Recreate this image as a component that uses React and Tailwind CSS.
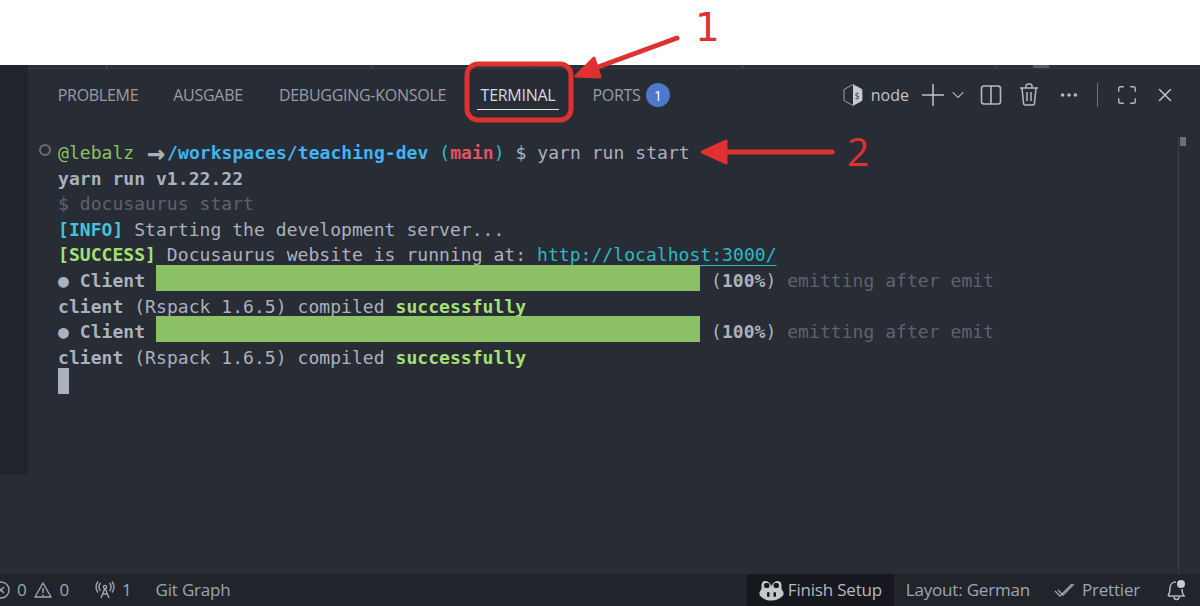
import React from 'react';
import { ChevronDown, Ellipsis, Maximize, Plus, X } from 'lucide-react';

const mono = "font-['DejaVu_Sans_Mono','Liberation_Mono',monospace]";
const ui = "font-['Open_Sans','Noto_Sans',sans-serif]";

const tabs = [
	{ label: 'PROBLEME', width: 'w-[80px]', gap: 'mr-[35px]' },
	{ label: 'AUSGABE', width: 'w-[70px]', gap: 'mr-[36px]' },
	{ label: 'DEBUGGING-KONSOLE', width: 'w-[167px]', gap: 'mr-[31px]' },
	{ label: 'TERMINAL', width: 'w-[82px]', gap: 'mr-[34px]', active: true },
	{ label: 'PORTS', width: 'w-[47px]', gap: 'mr-[6px]' },
];

function Tab({ label, width, gap, active }) {
	return (
		<div className={`${width} ${gap} h-[29px] flex justify-center items-center whitespace-nowrap text-[16px] tracking-[-0.27px] ${active ? 'text-[#d7dae0] border-b border-[#e4e6ea]' : 'text-[#9a9da3]'}`}>
			{label}
		</div>
	);
}

// cut-off editor rulers peeking out above the panel
function TopStrip() {
	return (
		<div className="relative h-[4px] shrink-0 bg-[#2c3039] border-b border-[#363a44]">
			<span className="absolute left-[78px] top-0 w-[1px] h-[3px] bg-[#4b505a]" />
			<span className="absolute left-[343px] top-0 w-[1px] h-[3px] bg-[#4b505a]" />
			<span className="absolute left-[505px] top-0 w-[1px] h-[3px] bg-[#4b505a]" />
			<span className="absolute left-[714px] top-0 w-[1px] h-[3px] bg-[#4b505a]" />
			<span className="absolute left-[968px] top-0 w-[1px] h-[3px] bg-[#4b505a]" />
			<span className="absolute left-[1005px] top-0 w-[16px] h-[3px] bg-[#565b65]" />
		</div>
	);
}

function NodeIcon() {
	return (
		<svg width="20" height="24" viewBox="0 0 20 24" className="mr-[8px]">
			<path d="M10 1.5 L19 6.5 V17.5 L10 22.5 L1 17.5 V6.5 Z" fill="none" stroke="#9aa0a8" strokeWidth="1" />
			<path d="M10 1.5 L19 6.5 V17.5 L10 22.5 Z" fill="#c8ccd2" />
			<text x="11.5" y="16" fontSize="8" fill="#282c34" fontFamily="DejaVu Sans Mono">$</text>
		</svg>
	);
}

function SplitIcon() {
	return (
		<svg width="22" height="22" viewBox="0 0 22 22" fill="none" stroke="#b5b9bf" strokeWidth="1.6">
			<rect x="1.5" y="2" width="19" height="18" rx="2.5" />
			<path d="M11 2 V20" />
		</svg>
	);
}

function TrashIcon() {
	return (
		<svg width="20" height="24" viewBox="0 0 20 24" fill="none" stroke="#b5b9bf" strokeWidth="1.5">
			<path d="M1 5 H19 M7 5 V3 a2 2 0 0 1 2 -2 h2 a2 2 0 0 1 2 2 V5" />
			<path d="M3 5 L4.5 20 a2 2 0 0 0 2 2 h7 a2 2 0 0 0 2 -2 L17 5" />
			<path d="M8 9 V18 M12 9 V18" />
		</svg>
	);
}

function CopilotIcon() {
	return (
		<svg width="25" height="21" viewBox="0 0 25 21" fill="#c5c8cd">
			<path d="M12.5 6 C10 0 3 -1 2.5 5 C2.4 7 3 8 2 10 L0.5 12 V15 C4 19 8 20.5 12.5 20.5 C17 20.5 21 19 24.5 15 V12 L23 10 C22 8 22.6 7 22.5 5 C22 -1 15 0 12.5 6 Z" />
			<rect x="5" y="3" width="5.5" height="5" rx="2" fill="#16181d" />
			<rect x="14.5" y="3" width="5.5" height="5" rx="2" fill="#16181d" />
			<rect x="8" y="12" width="2.5" height="5" rx="1.2" fill="#16181d" />
			<rect x="14.5" y="12" width="2.5" height="5" rx="1.2" fill="#16181d" />
		</svg>
	);
}

function DoubleCheckIcon() {
	return (
		<svg width="22" height="22" viewBox="0 0 22 22" fill="none" stroke="#9da5b4" strokeWidth="1.3" className="mr-[6px]">
			<path d="M1 12 L6 17 L8 15 M4 11 L9 16 L20 5" />
			<path d="M8 15 L18 5" />
		</svg>
	);
}

function Annotations() {
	return (
		<svg width="1200" height="606" viewBox="0 0 1200 606" className="absolute inset-0 pointer-events-none">
			<rect x="467" y="64" width="104" height="56" rx="11" fill="none" stroke="#e03131" strokeWidth="5" />
			<path d="M677 38 L598 67" stroke="#e03131" strokeWidth="5" strokeLinecap="round" />
			<path d="M576 76 L594 58 L600 77 Z" fill="#e03131" stroke="#e03131" strokeWidth="3" strokeLinejoin="round" />
			<path d="M832 152 H725" stroke="#e03131" strokeWidth="5" strokeLinecap="round" />
			<path d="M702 152 L726 141 V163 Z" fill="#e03131" stroke="#e03131" strokeWidth="3" strokeLinejoin="round" />
		</svg>
	);
}

function Line({ children, className = '' }) {
	return <div className={`h-[25.6px] whitespace-pre ${className}`}>{children}</div>;
}

function ProgressLine() {
	return (
		<Line className="flex text-[#abb2bf] font-bold">
			<span>● Client </span>
			<span className="w-[544px] -mt-[3px] h-[26px] bg-[#8cc265]" />
			<span className="ml-[11px]"><span className="font-normal">(</span>100%<span className="font-normal">)</span></span>
			<span className="font-normal text-[#5c6370]"> emitting after emit</span>
		</Line>
	);
}

function CompiledLine() {
	return (
		<Line className="text-[#abb2bf]">
			<span className="font-bold">client</span> (Rspack 1.6.5) compiled <span className="font-bold text-[#a5e075]">successfully</span>
		</Line>
	);
}

export default function App() {
	return (
		<div className={`relative w-[1200px] h-[606px] overflow-hidden bg-white flex flex-col ${ui}`}>
			<div className="h-[65px] shrink-0 bg-white" />
			<div className="flex-1 flex flex-col bg-[#282c34] min-h-0">
				<div className="flex-1 flex min-h-0">
					<div className="w-[28px] h-[410px] shrink-0 bg-[#21252b]" />
					<div className="flex-1 flex flex-col min-w-0">
						<TopStrip />
						<div className="h-[52px] flex items-center pl-[30px] pr-[24px] shrink-0">
							<Tab {...tabs[0]} />
							<Tab {...tabs[1]} />
							<Tab {...tabs[2]} />
							<Tab {...tabs[3]} />
							<Tab {...tabs[4]} />
							<div className="w-[24px] h-[24px] rounded-full bg-[#4d78cc] text-white text-[14px] flex items-center justify-center">1</div>
							<div className="flex-1" />
							<NodeIcon />
							<span className="text-[#c0c4ca] text-[16px] mr-[6px]">node</span>
							<Plus size={36} strokeWidth={1} className="text-[#c0c4ca] -mr-[3px]" />
							<ChevronDown size={20} strokeWidth={1.3} className="text-[#a4a8ae] mr-[12px]" />
							<SplitIcon />
							<div className="w-[17px]" />
							<TrashIcon />
							<div className="w-[19px]" />
							<Ellipsis size={22} strokeWidth={2} className="text-[#b5b9bf] mr-[17px]" />
							<div className="w-[1px] h-[24px] bg-[#6b7078] mr-[18px]" />
							<Maximize size={22} strokeWidth={1.5} className="text-[#b5b9bf] mr-[16px]" />
							<X size={22} strokeWidth={1.6} className="text-[#c0c4ca]" />
						</div>
						<div className="flex-1 flex min-h-0">
							<div className={`flex-1 pt-[19px] text-[18px] leading-[25.6px] tracking-[0.05px] ${mono}`}>
								<Line className="relative pl-[30px] text-[#abb2bf]">
									<span className="absolute left-[11px] top-[4px] w-[12px] h-[12px] rounded-full border-2 border-[#6a6f78]" />
									<span className="text-[#8cc265]">@lebalz </span>
									<span className="inline-block align-top ml-[2px] w-[20px] h-[25.6px] text-[30px] leading-[25.6px] font-bold text-[#aab0ba]">→</span>
									<span className="font-bold text-[#42b3f5]">/workspaces/teaching-dev</span>
									<span className="text-[#2bbac5]"> (</span>
									<span className="font-bold text-[#e05561]">main</span>
									<span className="text-[#2bbac5]">)</span> $ yarn run start
								</Line>
								<div className="pl-[30px]">
									<Line className="font-bold text-[#abb2bf]">yarn run v1.22.22</Line>
									<Line className="text-[#5c6370]">$ docusaurus start</Line>
									<Line className="text-[#abb2bf]"><span className="text-[#42c4dc] font-bold">[INFO]</span> Starting the development server...</Line>
									<Line className="text-[#abb2bf]"><span className="text-[#a5e075] font-bold">[SUCCESS]</span> Docusaurus website is running at: <span className="text-[#2bbac5] underline underline-offset-4">http://localhost:3000/</span></Line>
									<ProgressLine />
									<CompiledLine />
									<ProgressLine />
									<CompiledLine />
									<div className="w-[11px] h-[25.6px] -mt-[2px] bg-[#abb2bf]" />
								</div>
							</div>
							<div className="relative w-[22px] border-l border-[#3a3f48] mt-[16px]">
								<div className="absolute left-[1px] top-0 w-[6px] h-[9px] bg-[#6b7078]" />
							</div>
						</div>
					</div>
				</div>
				<div className="h-[32px] shrink-0 flex items-center bg-[#21252b] text-[#9da5b4] text-[17px] tracking-[-0.2px]">
					<svg width="20" height="20" viewBox="0 0 20 20" fill="none" stroke="#9da5b4" strokeWidth="1.4" className="ml-[-9px] mr-[6px]">
						<circle cx="10" cy="10" r="8" />
						<path d="M7 7 L13 13 M13 7 L7 13" />
					</svg>
					<span className="mr-[6px]">0</span>
					<svg width="20" height="20" viewBox="0 0 20 20" fill="none" stroke="#9da5b4" strokeWidth="1.4" className="mr-[7px]">
						<path d="M10 3 L18 17 H2 Z" strokeLinejoin="round" />
						<path d="M10 8 V13 M10 14.5 V16" />
					</svg>
					<span className="mr-[26px]">0</span>
					<svg width="20" height="20" viewBox="0 0 20 20" fill="none" stroke="#9da5b4" strokeWidth="1.4" className="mr-[7px]">
						<circle cx="10" cy="7" r="1.6" />
						<path d="M10 8 L6 18 M10 8 L14 18 M7.5 14 H12.5" />
						<path d="M5.5 3 C3.5 5.5 3.5 8.5 5.5 11 M14.5 3 C16.5 5.5 16.5 8.5 14.5 11 M3 1.5 C0.5 5 0.5 9 3 12.5 M17 1.5 C19.5 5 19.5 9 17 12.5" />
					</svg>
					<span className="mr-[24px]">1</span>
					<span>Git Graph</span>
					<div className="flex-1" />
					<div className="h-full flex items-center gap-[4px] w-[147px] pl-[12px] bg-[#16181d]">
						<CopilotIcon />
						<span className="text-[#b4b9c2]">Finish Setup</span>
					</div>
					<span className="ml-[12px] mr-[24px]">Layout: German</span>
					<DoubleCheckIcon />
					<span className="mr-[25px]">Prettier</span>
					<svg width="22" height="24" viewBox="0 0 22 24" fill="none" stroke="#b5b9bf" strokeWidth="1.5" className="mr-[13px]">
						<path d="M3 18 C5 15 5 13 5 10 C5 6 8 4 11 4 M3 18 H19 C17 15.5 17 14 17 11 M9 19 a2.5 2.5 0 0 0 5 0" />
						<circle cx="16" cy="6" r="4" fill="#c8ccd2" stroke="none" />
					</svg>
				</div>
			</div>
			<Annotations />
			<span className="absolute left-[695px] top-[6px] text-[39px] leading-[44px] text-[#e03131] font-['DejaVu_Sans']">1</span>
			<span className="absolute left-[847px] top-[129px] text-[39px] leading-[44px] text-[#e03131] font-['Open_Sans']">2</span>
		</div>
	);
}
